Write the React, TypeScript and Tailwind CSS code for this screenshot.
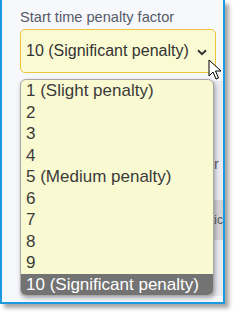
import React from "react";

const options = [
    "1 (Slight penalty)",
    "2",
    "3",
    "4",
    "5 (Medium penalty)",
    "6",
    "7",
    "8",
    "9",
    "10 (Significant penalty)",
];

export default function App() {
    const selected = options.length - 1;

    return (
        <div className="w-[235px] h-[315px] bg-white overflow-hidden" style={{ fontFamily: '"Liberation Sans", Arial, sans-serif' }}>
            {/* screenshot frame */}
            <div className="relative w-[225px] h-[304px] border-l-2 border-r-2 border-b-2 border-[#1b9ae0] bg-[#f7f8fc] shadow-[4px_4px_4px_rgba(0,0,0,0.35)] overflow-hidden">
                <div className="pl-[18px] pt-[8px]">
                    <label className="block text-[14.6px] leading-[18px] text-[#555a66]">Start time penalty factor</label>
                    <div className="mt-[3px] w-[196px] h-[44px] flex items-center justify-between pl-[5px] pr-[8px] bg-[#fbfbd3] border border-[#f0c43a] rounded-[5px]">
                        <span className="text-[16px] text-[#333]">{options[selected]}</span>
                        <svg width="10" height="7" viewBox="0 0 10 7" className="mt-[2px]">
                            <path d="M1 1.2 L5 5.2 L9 1.2" fill="none" stroke="#333" strokeWidth="2" />
                        </svg>
                    </div>

                    {/* content behind the open list */}
                    <div className="mt-[8px] w-[203px] h-[215px] bg-[#e9e9f1] flex flex-col">
                        <div className="h-[96px] flex items-end justify-end pr-[4px] pb-[2px]">
                            <span className="text-[15px] text-[#666]">Other</span>
                        </div>
                        <div className="mt-[23px] h-[40px] bg-[#d3d3d6] flex items-center justify-end whitespace-nowrap">
                            <span className="text-[12px] text-[#555]">Automatic</span>
                        </div>
                    </div>
                </div>

                {/* open dropdown list */}
                <ul className="absolute left-[18px] top-[79px] w-[194px] bg-[#fafad2] border border-[#a9a9a9] rounded-[6px] overflow-hidden shadow-[1px_2px_4px_rgba(0,0,0,0.35)]">
                    {options.map((o, i) => (
                        <li
                            key={o}
                            className={
                                i === selected
                                    ? "h-[21.5px] leading-[21.5px] pl-[5px] text-[17px] bg-[#737373] text-white"
                                    : "h-[21.5px] leading-[21.5px] pl-[5px] text-[17px] text-[#3a3a3a]"
                            }
                        >
                            {o}
                        </li>
                    ))}
                </ul>

                {/* mouse cursor */}
                <svg className="absolute left-[206px] top-[59px]" width="14" height="22" viewBox="0 0 14 22">
                    <path d="M1 1 L1 17 L5 13 L8 20 L10.5 19 L7.5 12 L13 12 Z" fill="#fff" stroke="#000" strokeWidth="1" strokeLinejoin="round" />
                </svg>
            </div>
        </div>
    );
}
